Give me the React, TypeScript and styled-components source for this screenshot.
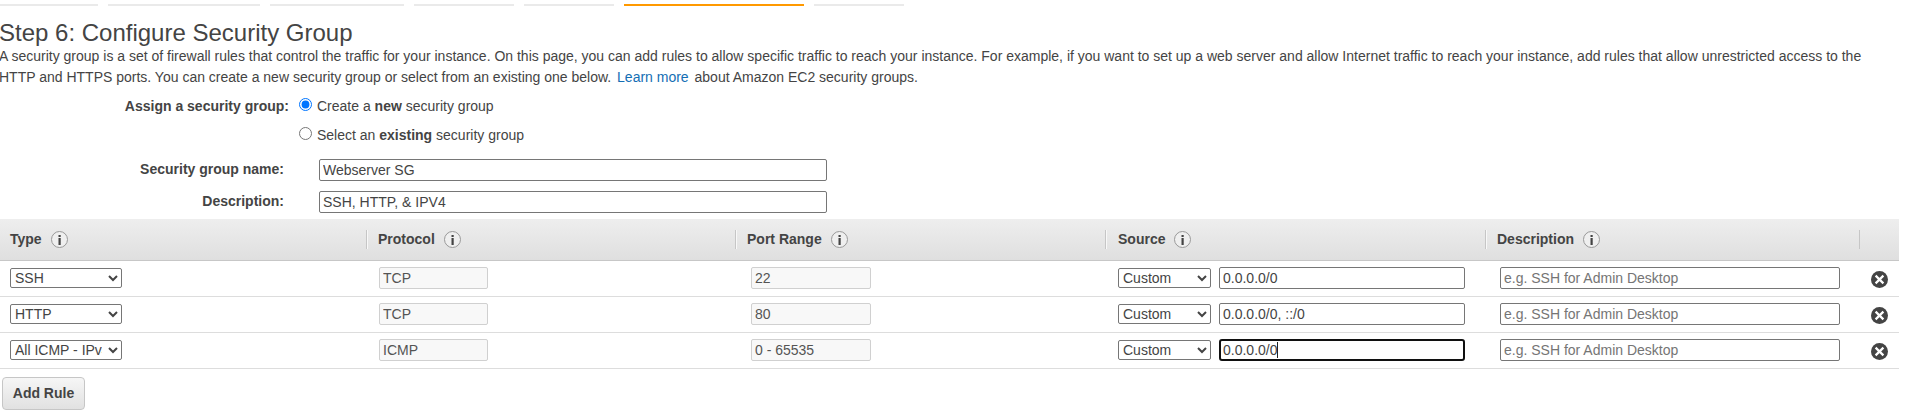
import React from "react";
import styled, { createGlobalStyle } from "styled-components";

const GlobalStyle = createGlobalStyle`
  * { box-sizing: border-box; }
  body {
    margin: 0;
    background: #fff;
    color: #444;
    font: 14px/21px "Liberation Sans", Arial, sans-serif;
    overflow: hidden;
  }
  input, select, button { font: inherit; color: inherit; margin: 0; }
`;

const Page = styled.main`
  width: 1899px;
`;

const Steps = styled.nav`
  display: flex;
  gap: 10px;
  padding-top: 4px;
`;

const Step = styled.span<{ $width: number; $active?: boolean }>`
  width: ${(p) => p.$width}px;
  height: 2px;
  background: ${(p) => (p.$active ? "#f90" : "#eaeaea")};
`;

const Title = styled.h1`
  margin: 13px 0 -1px -1px;
  font-size: 24px;
  font-weight: 400;
  line-height: 28px;
`;

const Intro = styled.p`
  margin: 0 0 0 -1px;
  white-space: nowrap;
`;

const Link = styled.a`
  margin: 0 2px;
  color: #146eb4;
  text-decoration: none;
`;

const GroupForm = styled.form`
  padding-top: 8px;
`;

const Assign = styled.div`
  display: flex;
  height: 63px;
`;

const FormLabel = styled.label<{ $width: number }>`
  width: ${(p) => p.$width}px;
  text-align: right;
  font-weight: 700;
`;

const Choices = styled.div`
  display: flex;
  flex-direction: column;
  gap: 8px;
  margin-left: 10px;
`;

const Choice = styled.label`
  display: flex;
  gap: 5px;
`;

const Radio = styled.input.attrs({ type: "radio" })`
  && { width: 13px; height: 13px; margin-top: 2px; }
`;

const FormRow = styled.div`
  display: flex;
  gap: 35px;
  height: 22px;
  margin-bottom: 10px;
  &:last-child { margin-bottom: 6px; }
`;

const TextInput = styled.input<{ $width: number; $focused?: boolean }>`
  display: block;
  flex: none;
  width: ${(p) => p.$width}px;
  height: 22px;
  padding: ${(p) => (p.$focused ? "0 2px" : "1px 3px")};
  border: ${(p) => (p.$focused ? "2px solid #101010" : "1px solid #767676")};
  border-radius: ${(p) => (p.$focused ? 3 : 2)}px;
  background: #fff;
  outline: none;
  line-height: 18px;
  &::placeholder { color: #757575; opacity: 1; }
  &:disabled { border-color: #d0d0d0; background: #f8f8f8; color: #545454; }
`;

const Field = styled.div`
  position: relative;
`;

const Caret = styled.span`
  position: absolute;
  left: 58px;
  top: 3px;
  width: 1px;
  height: 16px;
  background: #222;
`;

const Select = styled.select<{ $width: number }>`
  width: ${(p) => p.$width}px;
  height: 20px;
  padding: 0 3px 0 0;
  border: 1px solid #767676;
  border-radius: 2px;
  background: #fff;
`;

const columns = "366px 369px 370px 380px 374px 40px";

const TableHead = styled.div`
  display: grid;
  grid-template-columns: ${columns};
  align-items: center;
  height: 42px;
  border-bottom: 1px solid #c7c7c7;
  background: linear-gradient(#eee, #dfdfdf);
`;

const HeadCell = styled.div<{ $first?: boolean; $last?: boolean; $pad?: number }>`
  display: flex;
  align-items: center;
  gap: 9px;
  height: 19px;
  padding-left: ${(p) => p.$pad ?? 10}px;
  font-weight: 700;
  border-left: ${(p) => (p.$first ? "0" : "1px solid #c6c6c6")};
  box-shadow: ${(p) => (p.$first || p.$last ? "none" : "inset 1px 0 #f8f8f8")};
`;

const TableRow = styled.div`
  display: grid;
  grid-template-columns: ${columns};
  height: 36px;
  padding-top: 6px;
  border-bottom: 1px solid #ddd;
`;

const Cell = styled.div<{ $pad: number }>`
  display: flex;
  gap: 8px;
  padding-left: ${(p) => p.$pad}px;
  & > select { margin-top: 1px; }
  & > svg { margin-top: 4px; }
`;

const AddButton = styled.button`
  display: block;
  width: 83px;
  height: 33px;
  margin: 8px 0 0 2px;
  padding: 0;
  border: 1px solid #c6c6c6;
  border-radius: 4px;
  background: linear-gradient(#f6f6f6, #e1e1e1);
  font-weight: 700;
`;

const InfoIcon = () => (
  <svg width="17" height="17" viewBox="0 0 17 17">
    <circle cx="8.5" cy="8.5" r="8" fill="#efefef" stroke="#999" />
    <path d="M7.5 4h2.2v2h-2.2zM7.5 7h2.2v7h-2.2z" fill="#444" />
  </svg>
);

const RemoveIcon = () => (
  <svg width="17" height="17" viewBox="0 0 17 17">
    <circle cx="8.5" cy="8.5" r="8.5" fill="#444" />
    <path d="M4.6 4.6l7.8 7.8M12.4 4.6l-7.8 7.8" stroke="#fff" strokeWidth="2.2" />
  </svg>
);

const steps = [98, 152, 134, 100, 90, 180, 90];

const headings = [
  { text: "Type", pad: 10 },
  { text: "Protocol", pad: 11 },
  { text: "Port Range", pad: 11 },
  { text: "Source", pad: 12 },
  { text: "Description", pad: 11 },
];

const rules = [
  { type: "SSH", protocol: "TCP", port: "22", source: "0.0.0.0/0" },
  { type: "HTTP", protocol: "TCP", port: "80", source: "0.0.0.0/0, ::/0" },
  { type: "All ICMP - IPv4", protocol: "ICMP", port: "0 - 65535", source: "0.0.0.0/0", focused: true },
];

export default function App() {
  return (
    <Page>
      <GlobalStyle />
      <Steps>
        {steps.map((width, i) => (
          <Step key={i} $width={width} $active={i === 5} />
        ))}
      </Steps>
      <Title>Step 6: Configure Security Group</Title>
      <Intro>
        A security group is a set of firewall rules that control the traffic for your instance. On this page, you can add
        rules to allow specific traffic to reach your instance. For example, if you want to set up a web server and allow
        Internet traffic to reach your instance, add rules that allow unrestricted access to the
        <br />
        HTTP and HTTPS ports. You can create a new security group or select from an existing one below.{" "}
        <Link href="#">Learn more</Link> about Amazon EC2 security groups.
      </Intro>
      <GroupForm>
        <Assign>
          <FormLabel $width={289}>Assign a security group:</FormLabel>
          <Choices>
            <Choice>
              <Radio name="group" defaultChecked />
              <span>Create a <b>new</b> security group</span>
            </Choice>
            <Choice>
              <Radio name="group" />
              <span>Select an <b>existing</b> security group</span>
            </Choice>
          </Choices>
        </Assign>
        <FormRow>
          <FormLabel $width={284}>Security group name:</FormLabel>
          <TextInput $width={508} defaultValue="Webserver SG" />
        </FormRow>
        <FormRow>
          <FormLabel $width={284}>Description:</FormLabel>
          <TextInput $width={508} defaultValue="SSH, HTTP, & IPV4" />
        </FormRow>
      </GroupForm>
      <TableHead>
        {headings.map((h, i) => (
          <HeadCell key={h.text} $first={i === 0} $pad={h.pad}>
            {h.text}
            <InfoIcon />
          </HeadCell>
        ))}
        <HeadCell $last />
      </TableHead>
      {rules.map((rule) => (
        <TableRow key={rule.type}>
          <Cell $pad={10}>
            <Select $width={112}><option>{rule.type}</option></Select>
          </Cell>
          <Cell $pad={13}>
            <TextInput $width={109} defaultValue={rule.protocol} disabled />
          </Cell>
          <Cell $pad={16}>
            <TextInput $width={120} defaultValue={rule.port} disabled />
          </Cell>
          <Cell $pad={13}>
            <Select $width={93}><option>Custom</option></Select>
            <Field>
              <TextInput $width={246} $focused={rule.focused} defaultValue={rule.source} />
              {rule.focused && <Caret />}
            </Field>
          </Cell>
          <Cell $pad={15}>
            <TextInput $width={340} placeholder="e.g. SSH for Admin Desktop" />
          </Cell>
          <Cell $pad={12}>
            <RemoveIcon />
          </Cell>
        </TableRow>
      ))}
      <AddButton>Add Rule</AddButton>
    </Page>
  );
}
